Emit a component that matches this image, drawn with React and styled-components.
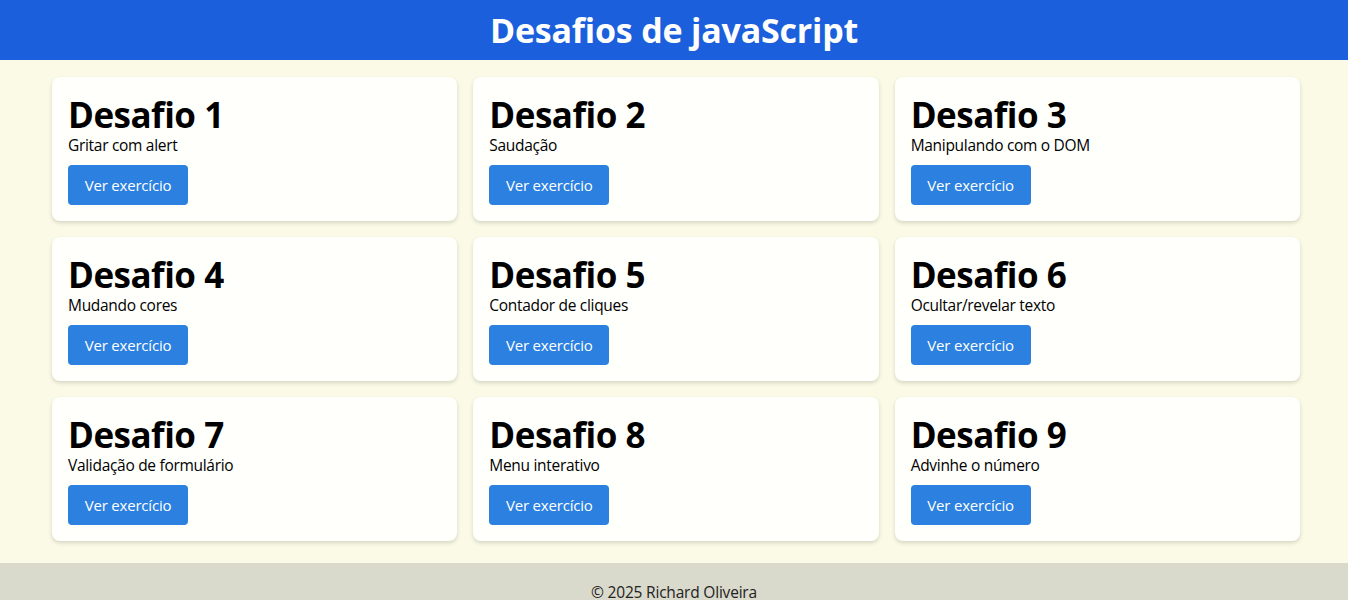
import React from "react";
import styled, { createGlobalStyle } from "styled-components";

const Global = createGlobalStyle`
  html, body { margin: 0; padding: 0; }
  body {
    background: #fafae6;
    font-family: "Open Sans", "Noto Sans", sans-serif;
    color: #000;
  }
`;

const Header = styled.header`
  background: #1c5fdc;
  height: 60px;
  display: flex;
  align-items: center;
  justify-content: center;
`;

const Title = styled.h1`
  margin: 0;
  color: #fff;
  font-size: 34px;
  font-weight: 700;
  letter-spacing: -0.2px;
`;

const Main = styled.main`
  padding: 17px 48px 22px 52px;
  display: grid;
  grid-template-columns: repeat(3, 1fr);
  gap: 16px;
`;

const Card = styled.section`
  background: #fffffc;
  border-radius: 8px;
  box-shadow: 0 2px 4px rgba(0, 0, 0, 0.15);
  padding: 16px;
  display: flex;
  flex-direction: column;
  align-items: flex-start;
`;

const CardTitle = styled.h2`
  margin: 0;
  font-size: 35px;
  line-height: 43px;
  font-weight: 700;
  letter-spacing: -0.5px;
`;

const CardText = styled.p`
  margin: 0 0 10px;
  font-size: 15.5px;
  line-height: 19px;
  letter-spacing: -0.3px;
`;

const Button = styled.button`
  width: 120px;
  height: 40px;
  border: none;
  border-radius: 4px;
  background: #2b80e0;
  color: #fff;
  font-family: inherit;
  font-size: 15px;
  letter-spacing: -0.2px;
  cursor: pointer;
`;

const Footer = styled.footer`
  background: #d9d9cc;
  padding: 20px 0;
  text-align: center;
  font-size: 15.5px;
  line-height: 19px;
  color: #222;
  letter-spacing: -0.2px;
`;

const challenges = [
  "Gritar com alert",
  "Saudação",
  "Manipulando com o DOM",
  "Mudando cores",
  "Contador de cliques",
  "Ocultar/revelar texto",
  "Validação de formulário",
  "Menu interativo",
  "Advinhe o número",
];

export default function App() {
  return (
    <>
      <Global />
      <Header>
        <Title>Desafios de javaScript</Title>
      </Header>
      <Main>
        {challenges.map((c, i) => (
          <Card key={i}>
            <CardTitle>Desafio {i + 1}</CardTitle>
            <CardText>{c}</CardText>
            <Button>Ver exercício</Button>
          </Card>
        ))}
      </Main>
      <Footer>© 2025 Richard Oliveira</Footer>
    </>
  );
}
